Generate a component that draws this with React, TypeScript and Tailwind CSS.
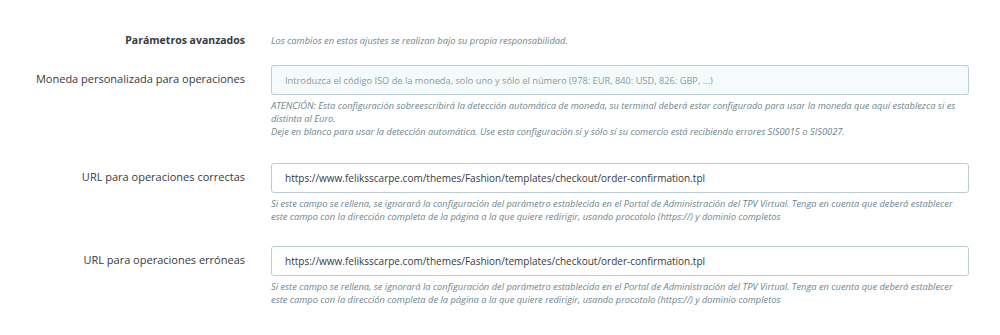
import React from "react";

const font = { fontFamily: '"Open Sans", "Noto Sans", sans-serif' };

type RowProps = {
  label: string;
  value?: string;
  placeholder?: string;
  help: React.ReactNode;
};

const FieldRow = ({ label, value, placeholder, help }: RowProps) => {
  return (
    <div className="flex">
      <div className="w-[245px] shrink-0 pt-[6px] text-right text-[11px] leading-[16px] text-[#363a41]">
        {label}
      </div>
      <div className="ml-[26px] w-[698px]">
        <input
          readOnly
          value={value}
          placeholder={placeholder}
          className={
            "h-[30px] w-full rounded-[3px] border border-[#bbcdd2] px-[13px] text-[10px] text-[#363a41] outline-none placeholder:text-[9.25px] placeholder:text-[#8a9ba1] " +
            (value ? "bg-white" : "bg-[#f5fafb]")
          }
          style={font}
        />
        <div className="mt-[4px] text-[9.3px] italic leading-[13px] text-[#6c868e]">
          {help}
        </div>
      </div>
    </div>
  );
};

const urlHelp = (
  <>
    Si este campo se rellena, se ignorará la configuración del parámetro establecida en el Portal de Administración del TPV Virtual. Tenga en cuenta que deberá establecer
    <br />
    este campo con la dirección completa de la página a la que quiere redirigir, usando procotolo (https://) y dominio completos
  </>
);

export default function App() {
  return (
    <div className="h-[335px] w-[1000px] bg-white" style={font}>
      <div className="pt-[33px]">
        {/* header row */}
        <div className="flex items-center">
          <div className="w-[245px] shrink-0 text-right text-[10.5px] font-bold text-[#363a41]">
            Parámetros avanzados
          </div>
          <div className="ml-[26px] text-[9.3px] italic text-[#6c868e]">
            Los cambios en estos ajustes se realizan bajo su propia responsabilidad.
          </div>
        </div>

        <div className="mt-[16px]">
          <FieldRow
            label="Moneda personalizada para operaciones"
            placeholder="Introduzca el código ISO de la moneda, solo uno y sólo el número (978: EUR, 840: USD, 826: GBP, ...)"
            help={
              <>
                ATENCIÓN: Esta configuración sobreescribirá la detección automática de moneda, su terminal deberá estar configurado para usar la moneda que aquí establezca si es
                <br />
                distinta al Euro.
                <br />
                Deje en blanco para usar la detección automática. Use esta configuración sí y sólo sí su comercio está recibiendo errores SIS0015 o SIS0027.
              </>
            }
          />
        </div>
        <div className="mt-[25px]">
          <FieldRow
            label="URL para operaciones correctas"
            value="https://www.feliksscarpe.com/themes/Fashion/templates/checkout/order-confirmation.tpl"
            help={urlHelp}
          />
        </div>
        <div className="mt-[23px]">
          <FieldRow
            label="URL para operaciones erróneas"
            value="https://www.feliksscarpe.com/themes/Fashion/templates/checkout/order-confirmation.tpl"
            help={urlHelp}
          />
        </div>
      </div>
    </div>
  );
}
